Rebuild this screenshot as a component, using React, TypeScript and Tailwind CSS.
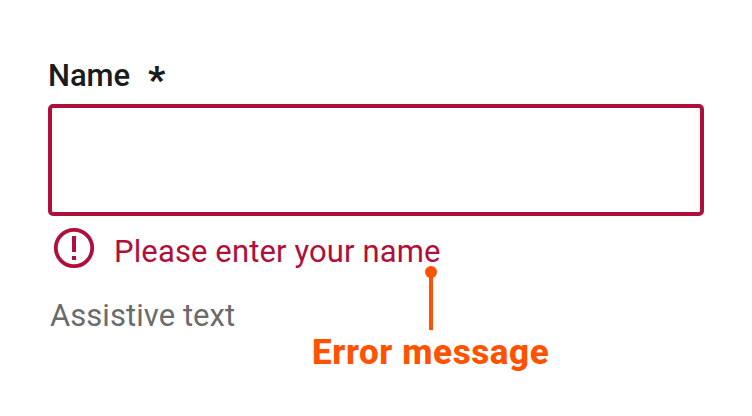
export default function App() {
  return (
    <main className="h-[416px] w-[752px] overflow-hidden bg-white px-12 pt-[56px] font-['Roboto','Liberation_Sans',sans-serif]">
      <label htmlFor="name" className="flex h-12 items-start text-[31px] leading-[39px] font-medium text-[#1b1b1b]">
        <span className="w-[100px] tracking-[-0.1px]">Name</span>
        <span className="text-[37px] leading-[48px] font-black">*</span>
      </label>
      <input id="name" className="block h-28 w-[656px] rounded-[5px] border-4 border-[#b00f3b] bg-white px-4 text-3xl outline-none" />
      <div className="flex h-[72px] items-start pt-[11px] pl-[5px] text-[#b00f3b]">
        <svg width="42" height="42" viewBox="0 0 42 42" fill="none" stroke="currentColor" strokeWidth="4">
          <circle cx="21" cy="21" r="18.2" strokeWidth="3.8" />
          <path d="M21 9v16M21 29v4" />
        </svg>
        <div className="relative ml-[19px] pt-[3px] text-[31px] leading-[44px] tracking-[0.12px]">
          Please enter your name
          <svg className="absolute top-[39px] left-[310px]" width="14" height="64" viewBox="0 0 14 64" fill="#ff5200">
            <circle cx="7" cy="6" r="6" /><path d="M5 6h4v58H5z" />
          </svg>
        </div>
      </div>
      <p className="h-[42px] pl-[2px] text-[31px] leading-[56px] tracking-[0.05px] text-[#6b6b6b]">Assistive text</p>
      <p className="pl-[264px] text-[35px] leading-[46px] font-extrabold tracking-[0.6px] text-[#ff5200]">Error message</p>
    </main>
  );
}
